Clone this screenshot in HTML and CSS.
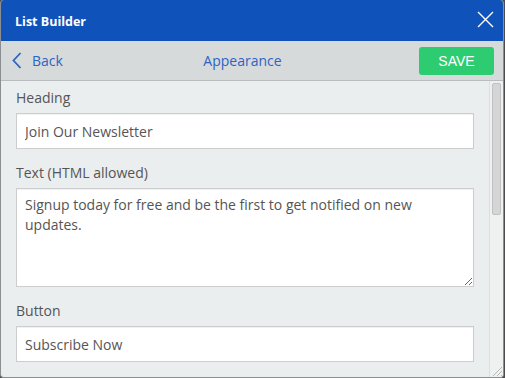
FILE: index.html
```html
<!DOCTYPE html>
<html lang="en">
<head>
    <meta charset="UTF-8" />
    <title>List Builder</title>
    <link rel="stylesheet" href="styles.css">
</head>
<body>
    <div class="window">
        <!-- Title bar -->
        <div class="titlebar">
            <span class="title">List Builder</span>
            <svg class="close" width="17" height="17" viewBox="0 0 17 17">
                <path d="M1 1 L16 16 M16 1 L1 16" stroke="#fff" stroke-width="1.4" fill="none"/>
            </svg>
        </div>

        <!-- Toolbar -->
        <div class="toolbar">
            <a class="back">
                <svg width="10" height="17" viewBox="0 0 10 17">
                    <path d="M8.5 1 L1.5 8.5 L8.5 16" stroke="#2f63c4" stroke-width="1.8" fill="none"/>
                </svg>
                <span>Back</span>
            </a>
            <div class="page-title">Appearance</div>
            <button class="save">SAVE</button>
        </div>

        <!-- Content -->
        <div class="content">
            <form class="panel">
                <div class="field">
                    <label for="heading">Heading</label>
                    <input type="text" id="heading" value="Join Our Newsletter" />
                </div>
                <div class="field">
                    <label for="text">Text (HTML allowed)</label>
                    <textarea id="text">Signup today for free and be the first to get notified on new updates.</textarea>
                </div>
                <div class="field">
                    <label for="button">Button</label>
                    <input type="text" id="button" value="Subscribe Now" />
                </div>
            </form>
            <div class="scrollbar">
                <div class="thumb"></div>
                <svg class="grip" width="13" height="13" viewBox="0 0 13 13">
                    <path d="M12 3 L3 12 M12 7 L7 12 M12 11 L11 12" stroke="#b9b9b9" stroke-width="1" fill="none"/>
                </svg>
            </div>
        </div>
    </div>
</body>
</html>
```

FILE: styles.css
```css
body {
    margin: 0;
    padding: 0;
    background: #4d4d4f;
    font-family: 'Open Sans', 'Liberation Sans', sans-serif;
}

.window {
    width: 504px;
    height: 378px;
    box-sizing: border-box;
    border: 1px solid #8c8f92;
    border-top: none;
    border-radius: 4px;
    overflow: hidden;
    display: flex;
    flex-direction: column;
    background-color: #eaeeef;
}

.titlebar {
    height: 41px;
    flex: none;
    background-color: #0f52b9;
    display: flex;
    align-items: center;
    justify-content: space-between;
    padding: 0 9px 0 14px;
}

.title {
    color: #fff;
    font-weight: bold;
    font-size: 12.5px;
    padding-top: 1px;
}

.close {
    display: block;
    margin-top: -2px;
}

.toolbar {
    height: 39px;
    flex: none;
    background-color: #d6dadb;
    border-bottom: 1px solid #b9bdbf;
    display: flex;
    align-items: center;
    padding: 0 9px 0 11px;
}

.back {
    display: flex;
    align-items: center;
    color: #2f63c4;
    font-size: 14px;
    width: 60px;
}

.back svg {
    display: block;
    margin-right: 10px;
}

.page-title {
    flex: 1;
    text-align: center;
    color: #2f63c4;
    font-size: 14px;
    padding-right: 6px;
}

.save {
    width: 75px;
    height: 28px;
    border: none;
    border-radius: 3px;
    background-color: #2ecc71;
    color: #fff;
    font-family: 'Liberation Sans', Arial, sans-serif;
    font-size: 14px;
    padding: 0;
}

.content {
    flex: 1;
    display: flex;
    min-height: 0;
    overflow: hidden;
}

.panel {
    flex: 1;
    padding: 7px 15px 0 15px;
}

.field {
    margin-bottom: 14px;
}

.field label {
    display: block;
    color: #555;
    font-size: 14px;
    line-height: 20px;
    margin-bottom: 5px;
}

.field input,
.field textarea {
    display: block;
    width: 100%;
    box-sizing: border-box;
    border: 1px solid #cbcdce;
    box-shadow: inset 0 1px 1px rgba(0, 0, 0, 0.06);
    background-color: #fff;
    color: #555;
    font-family: 'Open Sans', sans-serif;
    font-size: 14px;
    line-height: 20px;
    margin: 0;
    border-radius: 0;
}

.field input {
    height: 36px;
    padding: 0 8px;
}

.field textarea {
    height: 99px;
    padding: 6px 8px;
    resize: vertical;
}

.scrollbar {
    width: 13px;
    flex: none;
    background-color: #eff1f1;
    border-left: 1px solid #dcdfe0;
    display: flex;
    flex-direction: column;
    align-items: center;
}

.thumb {
    width: 9px;
    height: 132px;
    margin-top: 2px;
    box-sizing: border-box;
    background-color: #d5d5d5;
    border: 1px solid #bfc1c2;
    border-radius: 2px;
}

.grip {
    display: block;
    margin-top: auto;
    align-self: flex-end;
}
```
